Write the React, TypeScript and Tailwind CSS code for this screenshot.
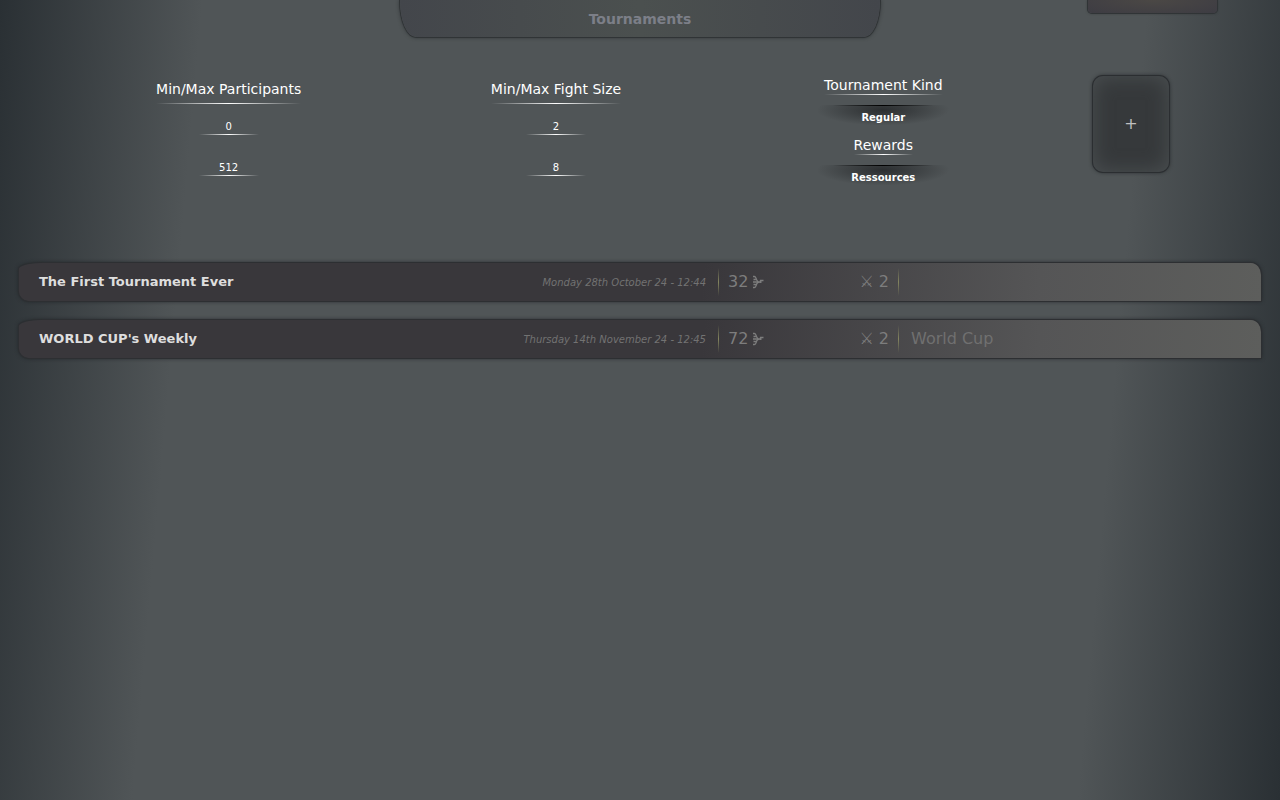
// Base Imports
import React, { useState } from "react";

const participantFields = [
  { name: "minParticipants", label: "Minimum participants", value: "0" },
  { name: "maxParticipants", label: "Maximum participants", value: "512" },
];

const fightSizeFields = [
  { name: "minFightSize", label: "Minimum fight size", value: "2" },
  { name: "maxFightSize", label: "Maximum fight size", value: "8" },
];

const tournaments = [
  {
    name: "The First Tournament Ever",
    date: "Monday 28th October 24 - 12:44",
    participants: 32,
    fightSize: 2,
    circuit: "",
  },
  {
    name: "WORLD CUP's Weekly",
    date: "Thursday 14th November 24 - 12:45",
    participants: 72,
    fightSize: 2,
    circuit: "World Cup",
  },
];

const RangeFilter = ({ title, fields }: any) => {
  const [values, setValues] = useState<any>({});

  return (
    <div role="group" aria-label={title} className="flex flex-col items-center pt-1">
      <div className="text-sm leading-5 text-white">
        {title}
        <div className="mt-1 h-px bg-linear-to-r from-transparent via-white to-transparent" />
      </div>
      {fields.map((field: any) => (
        <div key={field.name} className="mt-[14px] mb-[10px] flex flex-col items-center">
          <input
            type="text"
            aria-label={field.label}
            name={field.name}
            value={values[field.name] ?? field.value}
            onChange={(e) => setValues({ ...values, [field.name]: e.target.value })}
            className="h-4 w-15 bg-transparent text-center text-[10px] text-white outline-none"
          />
          <span className="h-px w-15 bg-linear-to-r from-transparent via-white to-transparent" />
        </div>
      ))}
    </div>
  );
};

const KindFilter = ({ title, value }: any) => (
  <div className="flex h-15 flex-col items-center">
    <div className="text-sm leading-5 text-white">
      {title}
      <div className="-mt-px h-px bg-linear-to-r from-transparent via-white to-transparent" />
    </div>
    <button
      type="button"
      className="mt-[10px] flex w-36 flex-col bg-[radial-gradient(ellipse_46%_62%_at_50%_20%,#2b2e30,transparent)] text-[10px] leading-6 font-bold text-white"
    >
      <span className="h-px w-full bg-linear-to-r from-transparent from-15% via-black to-transparent to-85%" />
      <span className="w-full">{value}</span>
    </button>
  </div>
);

const Divider = () => (
  <div className="h-7 w-px bg-linear-to-b from-transparent via-[#84855f] to-transparent" />
);

// Three prongs joined on a short handle
const FighterIcon = () => (
  <svg
    width="12"
    height="14"
    viewBox="0 0 12 14"
    fill="none"
    stroke="currentColor"
    strokeWidth="1.3"
    aria-hidden="true"
  >
    <path d="M1 1.5H2.5C4.2 1.5 4 4.2 5 5.5C5.6 6.4 6.5 7 8 7M1 12.5H2.5C4.2 12.5 4 9.8 5 8.5C5.6 7.6 6.5 7 8 7M1.5 4.5H3.8M1.5 9.5H3.8M1 7H9.5" />
    <path d="M8.5 8V5.5H11.5" />
  </svg>
);

const App = () => {
  return (
    <div className="min-h-screen overflow-hidden bg-[linear-gradient(95deg,#2a3034,#505557_15%,#505557_85%,#2a3034)] font-['DejaVu_Sans',sans-serif]">
      <header className="grid h-10 grid-cols-[1fr_480px_1fr] items-start">
        <h1 className="col-start-2 h-[37px] rounded-b-[16px_36px] bg-linear-to-r from-[#43464b] via-[#4b504f] to-[#43464b] text-center text-sm leading-[38px] font-bold text-[#7c7f88] shadow-[0_0_0_1px_#303436,0_0_4px_#25282a]">
          Tournaments
        </h1>
        <button
          type="button"
          aria-label="Account"
          className="mr-[63px] h-[13px] w-[129px] justify-self-end rounded-b bg-[radial-gradient(ellipse_at_50%_0%,#4b4845,#3d3c43)] shadow-[0_0_0_1px_#303436,0_0_3px_#25282a]"
        />
      </header>

      <section className="mt-9 flex h-[187px] items-start">
        <div className="-mt-px ml-[65px] grid flex-1 grid-cols-3 justify-items-center">
          <RangeFilter title="Min/Max Participants" fields={participantFields} />
          <RangeFilter title="Min/Max Fight Size" fields={fightSizeFields} />
          <div>
            <KindFilter title="Tournament Kind" value="Regular" />
            <KindFilter title="Rewards" value="Ressources" />
          </div>
        </div>
        <button
          type="button"
          aria-label="Create tournament"
          className="mr-[111px] ml-[46px] h-24 w-[76px] rounded-[10px] bg-[#36393b] text-base text-[#c0c0c0] shadow-[0_0_0_1px_#2b2e31,0_0_4px_#1b1e20,inset_0_0_20px_#4b5052]"
        >
          +
        </button>
      </section>

      <ul className="mx-[19px] flex flex-col gap-[19px]">
        {tournaments.map((item) => (
          <li
            key={item.name}
            className="flex h-[38px] items-center rounded-[24px_10px_0_10px/6px_12px_0_10px] bg-[linear-gradient(95deg,#39373b_55%,#555556_82%,#5d5e5c)] text-[#7d7d7d] shadow-[0_0_0_1px_#2d2f32,0_0_4px_#1b1e20]"
          >
            <a href="#" className="flex-1 pl-5 text-[13px] font-bold text-[#dedede]">
              {item.name}
            </a>
            <time className="mr-3 text-[10px] text-[#727272] italic">{item.date}</time>
            <Divider />
            <div className="flex w-[179px] justify-between px-[9px] text-base">
              <span className="flex items-center gap-1">
                {item.participants}
                <FighterIcon />
              </span>
              <span>⚔ {item.fightSize}</span>
            </div>
            <Divider />
            <span className="w-[362px] pl-3 text-base text-[#707070]">{item.circuit}</span>
          </li>
        ))}
      </ul>
    </div>
  );
};

export default App;
